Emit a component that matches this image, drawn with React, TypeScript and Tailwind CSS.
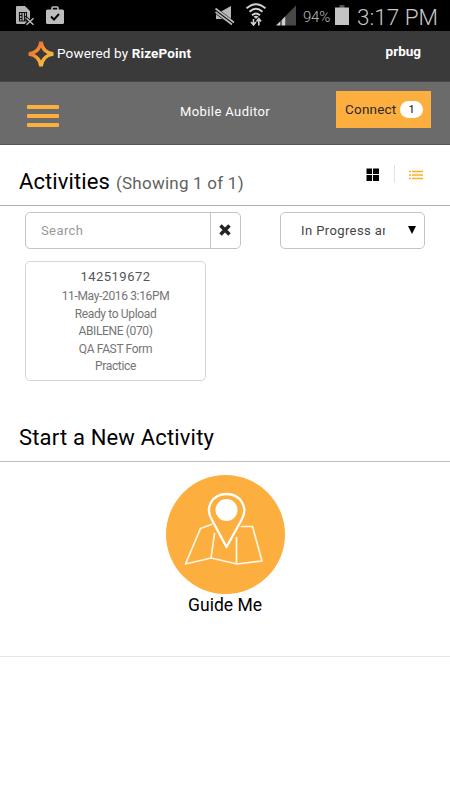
import React from "react";

function StatusBar() {
  return (
    <div className="flex h-[31px] bg-black text-[#bdbdbd]">
      <svg className="mt-[5px] ml-4 h-[21px] w-[19px]" viewBox="0 0 19 21">
        <path d="M0 2q0-1 1-1h8l5 5v13H1q-1 0-1-1z" fill="#b5b5b5" />
        <path d="M3.500 7.500h7v8.500h-7zM6 7.500v9M8.500 7.500v9M3.500 10.500h2.500M3.500 13.500h2.500M8.500 11.500h2" fill="none" stroke="#111" strokeWidth="1.100" />
        <path d="M10 13l7.500 7M17.500 13l-7.500 7" stroke="#000" strokeWidth="3.500" />
        <path d="M10.500 13.300l7 6.400M17.500 13.300l-7 6.400" stroke="#bdbdbd" strokeWidth="1.500" />
      </svg>
      <svg className="mt-[6px] ml-[11px] h-[18px] w-[18px]" viewBox="0 0 18 18">
        <path d="M6 4V2q0-1 1-1h4q1 0 1 1v2" fill="none" stroke="#bdbdbd" strokeWidth="1.600" />
        <rect y="3.500" width="18" height="14.500" rx="1.500" fill="#bdbdbd" />
        <path d="M5 10.500l3 3 5-5.500" fill="none" stroke="#000" strokeWidth="1.900" />
      </svg>
      <svg className="mt-[5px] ml-[151px] h-[21px] w-[20px]" viewBox="0 0 20 21">
        <path d="M1 6.500h5L16 1v17.500L7 14H1z" fill="#b8b8b8" />
        <path d="M0 5L19 19.500" stroke="#000" strokeWidth="5.500" />
        <path d="M.5 3.500L19 17.500M.5 7L17 19.500" stroke="#b8b8b8" strokeWidth="1.700" />
      </svg>
      <svg className="mt-[3px] ml-[11px] h-[24px] w-[20px]" viewBox="0 0 20 24" fill="none" stroke="#d0d0d0">
        <path d="M.500 5.300Q10-3 19.500 5.300M3.500 8.800Q10 2.800 16.500 8.800M6 12.300Q10 8.500 14 12.300" strokeWidth="1.900" />
        <path d="M7.500 13.500L10 16l2.500-2.500Q10 12 7.500 13.500z" fill="#d0d0d0" stroke="none" />
        <path d="M7.500 16v6.500M5 19l2.500 3 2.500-3M12.800 22.500V16M10.500 18.500l2.300-3 2.300 3" strokeWidth="1.600" />
      </svg>
      <svg className="mt-[5px] ml-[10px] h-[21px] w-[20px]" viewBox="0 0 20 21">
        <path d="M20 .500V20.500H10V10.500z" fill="#484848" />
        <path d="M0 20.500l4.500-4.500v4.500zM5.500 15.300L9.500 11v9.500h-4z" fill="#d0d0d0" />
      </svg>
      <span className="mt-[7px] ml-[7px] w-[28px] text-[15px] leading-[20px] font-light tracking-[-0.200px] whitespace-nowrap">94%</span>
      <svg className="mt-[5px] ml-[4px] h-[20px] w-[14px]" viewBox="0 0 14 20">
        <path d="M4.500 0h5v3h-5z" fill="#555" />
        <path d="M0 2.500h14V20H0z" fill="#c4c4c4" />
      </svg>
      <span className="mt-[4px] ml-[8px] text-[22.500px] leading-[26px] font-light whitespace-nowrap text-[#c8c8c8]">3:17 PM</span>
    </div>
  );
}

function BrandHeader() {
  return (
    <header className="flex h-[50px] bg-[#3a3a3b] text-white">
      <svg className="mt-[10px] ml-[28px] h-[26px] w-[26px]" viewBox="0 0 26 26">
        <defs>
          <linearGradient id="brand" x1="0" y1="0" x2="1" y2="1">
            <stop offset="0.200" stopColor="#ed7030" />
            <stop offset="0.550" stopColor="#f5a338" />
            <stop offset="1" stopColor="#f5cf52" />
          </linearGradient>
        </defs>
        <path fillRule="evenodd" fill="url(#brand)" d="M11.200 .500h3.600Q16 10 25.500 11.200v3.600Q16 16 14.800 25.500h-3.600Q10 16 .500 14.800v-3.600Q10 10 11.200 .500zM13 6.500Q11 11 6.500 13Q11 15 13 19.500Q15 15 19.500 13Q15 11 13 6.500z" />
      </svg>
      <span className="mt-[13px] ml-[3px] text-[13.500px] leading-[18px] tracking-[0.130px] whitespace-nowrap">
        Powered by <b className="font-bold">RizePoint</b>
      </span>
      <b className="mt-[11px] mr-[29px] ml-auto text-[13.500px] leading-[18px] font-bold">prbug</b>
    </header>
  );
}

function NavBar() {
  return (
    <nav className="flex h-16 border-t border-b border-t-[#484848] border-b-[#565656] bg-[#6b6b6b]">
      <button className="mt-[23px] ml-[27px] flex h-[22px] w-8 flex-col justify-between" aria-label="Menu">
        <span className="h-1 w-8 rounded-[1px] bg-[#fcaf3e]" />
        <span className="h-1 w-8 rounded-[1px] bg-[#fcaf3e]" />
        <span className="h-1 w-8 rounded-[1px] bg-[#fcaf3e]" />
      </button>
      <span className="mt-[21px] ml-[121px] w-[90px] text-[13px] leading-[18px] tracking-[0.400px] whitespace-nowrap text-white">Mobile Auditor</span>
      <button className="mt-[9px] ml-[66px] flex h-[37px] w-[95px] items-center bg-[#fcaf3e] pl-[9px] text-[13.500px] text-[#292929]">
        <span className="w-[55px] text-left tracking-[0.200px]">Connect</span>
        <span className="h-[17px] w-[23px] rounded-full bg-white text-center text-[10px] leading-[17px] font-medium">1</span>
      </button>
    </nav>
  );
}

function ActivitiesHeading() {
  return (
    <div className="flex h-[61px] border-b border-[#b1b1b1]">
      <h1 className="mt-[23px] ml-[19px] flex w-[347px] items-baseline gap-[6px] text-[22px] leading-[28px] whitespace-nowrap text-black">
        <span className="tracking-[0.100px]">Activities</span>
        <span className="text-[17px] tracking-[0.230px] text-[#616161]">(Showing 1 of 1)</span>
      </h1>
      <svg className="mt-[23px] h-[13px] w-[13px]" viewBox="0 0 13 13">
        <path d="M.500 .500h5.500v5.500H.500zM7 .500h6v5.500H7zM.500 7h5.500v6H.500zM7 7h6v6H7z" fill="#000" />
      </svg>
      <span className="mt-[20px] ml-[15px] h-[18px] w-px bg-[#e2e2e2]" />
      <svg className="mt-[25px] ml-[14px] h-[10px] w-[14px]" viewBox="0 0 14 10">
        <path d="M0 1.500h2M3 1.500h11M0 5h2M3 5h11M0 8.500h2M3 8.500h11" stroke="#ffad25" strokeWidth="1.600" />
      </svg>
    </div>
  );
}

function Filters() {
  return (
    <div className="flex pt-[6px] pl-[25px]">
      <div className="flex h-[37px] w-[216px] rounded-[5px] border border-[#c4c4c4]">
        <span className="w-[185px] border-r border-[#c4c4c4] pl-[15px] text-[13px] leading-[36px] tracking-[0.400px] text-[#999]">Search</span>
        <svg className="mt-[11px] ml-[8px] h-3 w-3" viewBox="0 0 12 12">
          <path d="M1.500 1.500l9 9M10.500 1.500l-9 9" stroke="#242424" strokeWidth="3.500" />
        </svg>
      </div>
      <div className="ml-[39px] flex h-[37px] w-[145px] rounded-[5px] border border-[#c4c4c4] pl-[20px]">
        <span className="w-[84px] overflow-hidden text-[13px] leading-[36px] tracking-[0.400px] whitespace-nowrap text-[#444]">In Progress and</span>
        <svg className="mt-[13px] ml-[23px] h-2 w-2" viewBox="0 0 8 8">
          <path d="M0 0h8L4 8z" fill="#000" />
        </svg>
      </div>
    </div>
  );
}

const details = ["11-May-2016 3:16PM", "Ready to Upload", "ABILENE (070)", "QA FAST Form", "Practice"];

function ActivityCard() {
  return (
    <article className="mt-[12px] ml-[25px] flex h-[120px] w-[181px] flex-col items-center rounded-[5px] border border-[#d5d5d5] pt-[5px] text-[#757575]">
      <h3 className="h-[21px] text-[13px] leading-[20px] tracking-[0.450px] text-[#555]">142519672</h3>
      {details.map((line) => (
        <p key={line} className="h-[17.500px] text-[12px] leading-[17px] tracking-[-0.350px] whitespace-nowrap">{line}</p>
      ))}
    </article>
  );
}

function GuideMe() {
  return (
    <section className="flex h-[195px] flex-col items-center border-b border-[#e5e5e5] pt-[13px]">
      <svg className="h-[119px] w-[119px]" viewBox="0 0 119 119" fill="none" stroke="#fff" strokeLinecap="round" strokeLinejoin="round">
        <circle cx="59.500" cy="59.500" r="59.500" fill="#fcaf3e" stroke="none" />
        <path d="M45.500 49.500l-11 4L19.500 89l25.500-6 26 6 25-3L86.500 51.500H75.500M48.500 58.500L45 83M70.500 62.500V89" strokeWidth="1.700" stroke="#fff5e3" />
        <path d="M60.500 72L46 45C38 32 47 19 60.500 19S83 32 75.500 45z" strokeWidth="2.300" />
        <circle cx="60.500" cy="35" r="11" fill="#fff" stroke="none" />
      </svg>
      <span className="text-[17.500px] leading-[23px] text-black">Guide Me</span>
    </section>
  );
}

export default function App() {
  return (
    <main className="h-[800px] w-[450px] overflow-hidden bg-white font-[Roboto,sans-serif]">
      <StatusBar />
      <BrandHeader />
      <NavBar />
      <ActivitiesHeading />
      <Filters />
      <ActivityCard />
      <h2 className="mt-[42px] ml-[19px] h-[38px] text-[22px] leading-[29px] tracking-[0.170px] whitespace-nowrap text-black">Start a New Activity</h2>
      <div className="h-px bg-[#bebebe]" />
      <GuideMe />
    </main>
  );
}
